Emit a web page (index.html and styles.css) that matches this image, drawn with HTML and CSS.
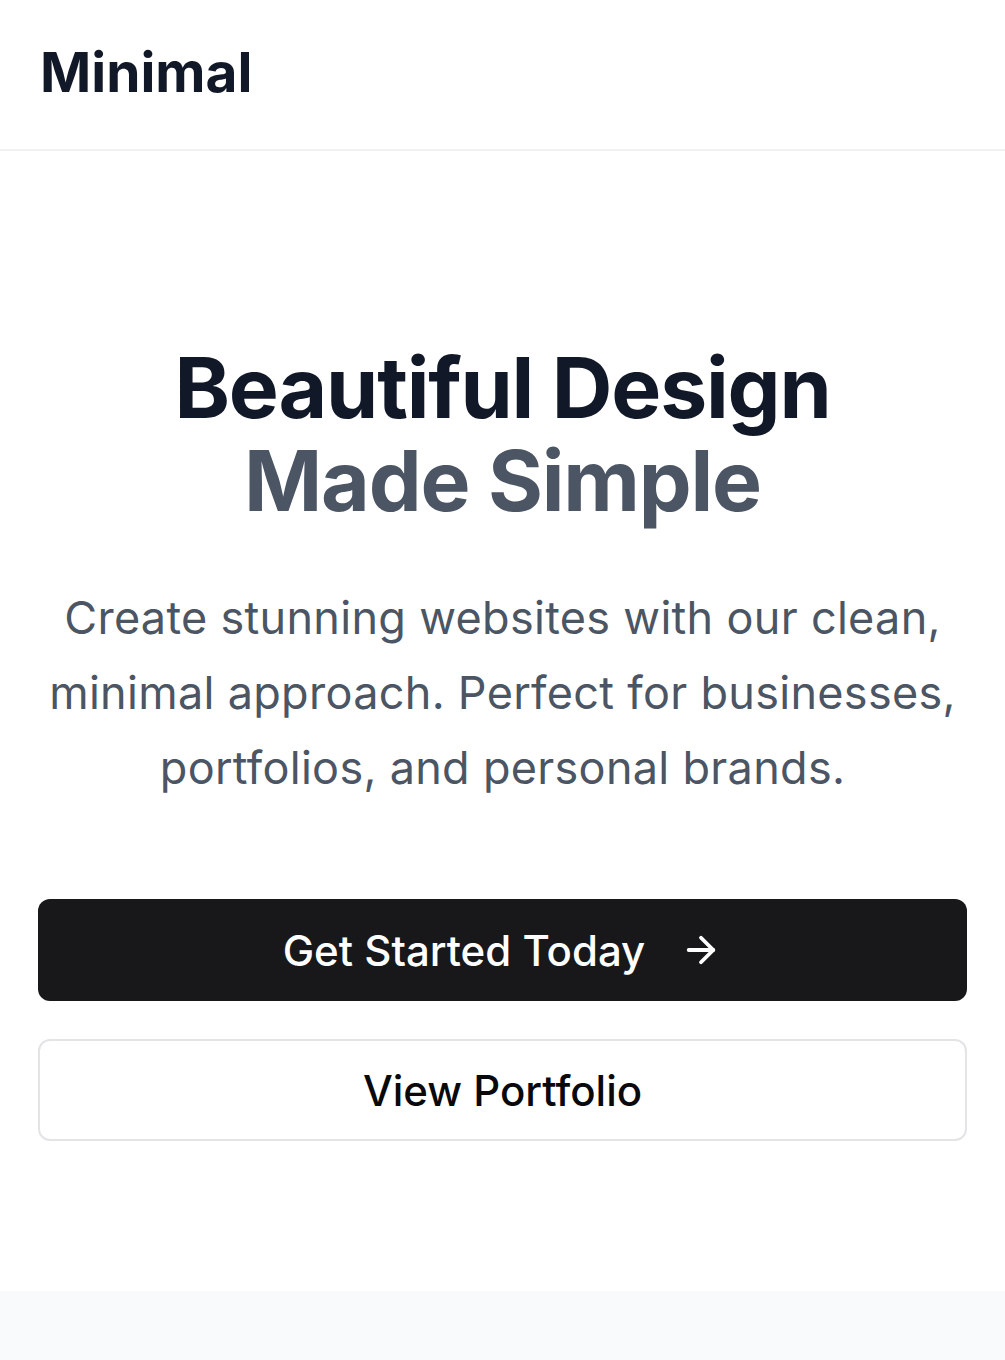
FILE: index.html
```html
<!DOCTYPE html>
<html lang="en">
<head>
<meta charset="utf-8">
<title>Minimal</title>
<link rel="stylesheet" href="styles.css">
</head>
<body>
<header class="site-header">
  <div class="logo">Minimal</div>
</header>
<main>
  <section class="hero">
    <h1 class="hero-title">
      <span class="line-dark">Beautiful Design</span>
      <span class="line-muted">Made Simple</span>
    </h1>
    <p class="hero-text">Create stunning websites with our clean, minimal approach. Perfect for businesses, portfolios, and personal brands.</p>
    <div class="actions">
      <a class="btn btn-primary" href="#">Get Started Today
        <svg class="icon" viewBox="0 0 24 24" fill="none" stroke="currentColor" stroke-width="2" stroke-linecap="round" stroke-linejoin="round"><path d="M5 12h14"/><path d="m12 5 7 7-7 7"/></svg>
      </a>
      <a class="btn btn-outline" href="#">View Portfolio</a>
    </div>
  </section>
  <section class="next-section"></section>
</main>
</body>
</html>
```

FILE: styles.css
```css
* { box-sizing: border-box; }
html, body { margin: 0; padding: 0; }
body {
  font-family: Inter, "Noto Sans", sans-serif;
  background: #ffffff;
  color: #111827;
}
.site-header {
  height: 151px;
  border-bottom: 2px solid #f1f1f3;
  display: flex;
  align-items: center;
  padding: 0 40px;
}
.logo {
  font-size: 55px;
  font-weight: 700;
  letter-spacing: 0;
  color: #111827;
  line-height: 1;
  margin-top: -4px;
}
.hero {
  padding: 190px 38px 150px;
  display: flex;
  flex-direction: column;
  align-items: center;
  text-align: center;
}
.hero-title {
  margin: 0;
  font-size: 84px;
  font-weight: 700;
  line-height: 93px;
  letter-spacing: -1.2px;
  display: flex;
  flex-direction: column;
}
.line-dark { color: #111827; }
.line-muted { color: #4b5563; }
.hero-text {
  margin: 53px 0 0;
  font-size: 45px;
  line-height: 75px;
  letter-spacing: 0.3px;
  color: #4b5563;
  font-weight: 400;
  max-width: 930px;
}
.actions {
  margin-top: 94px;
  width: 100%;
  display: flex;
  flex-direction: column;
  gap: 38px;
}
.btn {
  height: 102px;
  border-radius: 12px;
  display: flex;
  align-items: center;
  justify-content: center;
  gap: 35px;
  font-size: 42px;
  font-weight: 500;
  text-decoration: none;
}
.btn-primary {
  background: #18181b;
  color: #ffffff;
}
.btn-outline {
  background: #ffffff;
  color: #09090b;
  border: 2px solid #e4e4e7;
}
.icon {
  width: 42px;
  height: 42px;
  stroke-width: 2.2;
}
.next-section {
  background: #f9fafb;
  height: 200px;
}
```
